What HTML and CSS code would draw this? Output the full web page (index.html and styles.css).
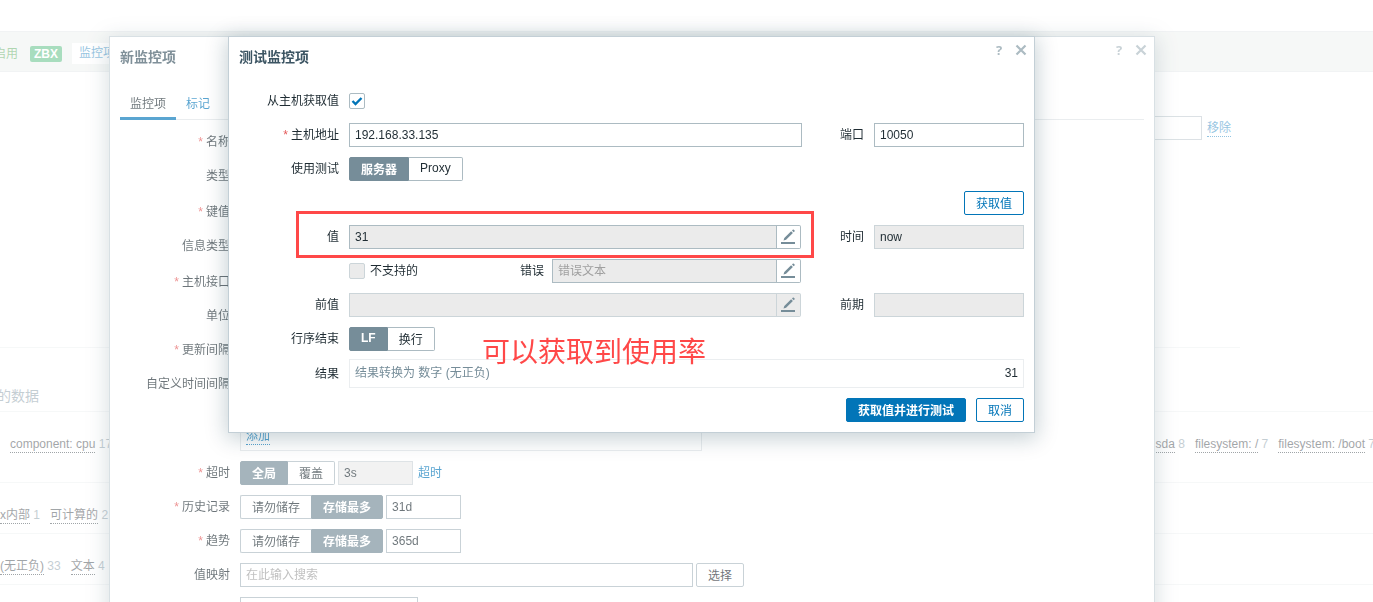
FILE: index.html
```
<!DOCTYPE html>
<html lang="zh-CN">
<head>
  <meta charset="UTF-8">
  <meta name="viewport" content="width=device-width, initial-scale=1.0">
  <title>测试监控项</title>
  <link rel="stylesheet" href="styles.css">
</head>
<body>
  <div class="page">
    <nav class="host-nav">
      <span class="status-enabled">启用</span>
      <span class="status-zbx">ZBX</span>
      <a class="nav-item" href="#items">监控项</a>
    </nav>

    <div class="filter">
      <div class="filter-row">
        <input type="text" class="filter-value" aria-label="值">
        <a class="link-dotted" href="#remove">移除</a>
      </div>
    </div>

    <h4 class="subfilter-title">的数据</h4>
    <div class="subfilter subfilter-tags">
      <div class="subfilter-group">
        <span><a href="#cpu">component: cpu</a> 17</span>
      </div>
      <div class="subfilter-group subfilter-right">
        <span><a href="#sda">sda</a> 8</span>
        <span><a href="#root">filesystem: /</a> 7</span>
        <span><a href="#boot">filesystem: /boot</a> 7</span>
      </div>
    </div>
    <div class="subfilter subfilter-cut">
      <div class="subfilter-group">
        <span><a href="#internal">x内部</a> 1</span>
        <span><a href="#calculated">可计算的</a> 2</span>
      </div>
    </div>
    <div class="subfilter subfilter-cut">
      <div class="subfilter-group">
        <span><a href="#unsigned"> (无正负)</a> 33</span>
        <span><a href="#text">文本</a> 4</span>
      </div>
    </div>
  </div>

  <div class="overlay overlay-item">
    <section class="dialog dialog-item">
      <header class="dialog-header">
        <h4>新监控项</h4>
        <button type="button" class="btn-icon" aria-label="帮助">?</button>
        <button type="button" class="btn-icon" aria-label="关闭">
          <svg width="12" height="12" viewBox="0 0 12 12"><path d="M1.5 1.5l9 9M10.5 1.5l-9 9" stroke="currentColor" stroke-width="2.2" fill="none"/></svg>
        </button>
      </header>
      <nav class="tabs">
        <a class="tab tab-active" href="#item">监控项</a>
        <a class="tab" href="#tags">标记</a>
      </nav>
      <form class="item-form">
        <div class="item-row"><label class="required" for="name">名称</label><input type="text" id="name" class="w-wide"></div>
        <div class="item-row row-select"><label for="type">类型</label><select id="type"><option>Zabbix客户端</option></select></div>
        <div class="item-row"><label class="required" for="key">键值</label><input type="text" id="key" class="w-wide"></div>
        <div class="item-row row-select"><label for="valueType">信息类型</label><select id="valueType"><option>数字 (无正负)</option></select></div>
        <div class="item-row"><label class="required" for="interface">主机接口</label><input type="text" id="interface" class="w-wide"></div>
        <div class="item-row"><label for="units">单位</label><input type="text" id="units" class="w-wide"></div>
        <div class="item-row"><label class="required" for="delay">更新间隔</label><input type="text" id="delay" class="w-short"></div>
        <div class="item-row">
          <span class="label">自定义时间间隔</span>
          <div class="intervals"><a class="link-dotted" href="#add">添加</a></div>
        </div>
        <div class="item-row">
          <label class="required" for="timeout">超时</label>
          <div class="toggle"><button type="button" class="selected">全局</button><button type="button">覆盖</button></div>
          <input type="text" id="timeout" class="w-short" value="3s" disabled>
          <a class="link" href="#timeouts">超时</a>
        </div>
        <div class="item-row">
          <label class="required" for="history">历史记录</label>
          <div class="toggle"><button type="button">请勿储存</button><button type="button" class="selected">存储最多</button></div>
          <input type="text" id="history" class="w-short" value="31d">
        </div>
        <div class="item-row">
          <label class="required" for="trends">趋势</label>
          <div class="toggle"><button type="button">请勿储存</button><button type="button" class="selected">存储最多</button></div>
          <input type="text" id="trends" class="w-short" value="365d">
        </div>
        <div class="item-row">
          <label for="valuemap">值映射</label>
          <input type="text" id="valuemap" class="w-wide" placeholder="在此输入搜索">
          <button type="button" class="btn-grey">选择</button>
        </div>
        <div class="item-row">
          <span class="label"></span>
          <input type="text" class="w-medium" aria-label="填充主机资产记录字段">
        </div>
      </form>
    </section>
  </div>

  <div class="overlay overlay-test">
    <section class="dialog">
      <header class="dialog-header">
        <h4>测试监控项</h4>
        <button type="button" class="btn-icon" aria-label="帮助">?</button>
        <button type="button" class="btn-icon" aria-label="关闭">
          <svg width="12" height="12" viewBox="0 0 12 12"><path d="M1.5 1.5l9 9M10.5 1.5l-9 9" stroke="currentColor" stroke-width="2.2" fill="none"/></svg>
        </button>
      </header>
      <form class="test-form">
        <div class="test-row">
          <label for="getValue">从主机获取值</label>
          <div class="field"><input type="checkbox" id="getValue" checked></div>
        </div>
        <div class="test-row">
          <label class="required" for="address">主机地址</label>
          <input type="text" id="address" value="192.168.33.135">
          <label for="port">端口</label>
          <input type="text" id="port" value="10050">
        </div>
        <div class="test-row">
          <span class="label">使用测试</span>
          <div class="toggle"><button type="button" class="selected">服务器</button><button type="button">Proxy</button></div>
        </div>
        <div class="test-actions">
          <button type="button" class="btn">获取值</button>
        </div>
        <div class="test-row">
          <label for="value">值</label>
          <div class="multiline">
            <input type="text" id="value" value="31" readonly>
            <button type="button" aria-label="编辑值">
              <svg width="16" height="16" viewBox="0 0 16 16"><path d="M1 13h14v2H1z" fill="currentColor"/><path d="M3.5 11.5l.8-2.6 6.8-6.6 1.8 1.8-6.8 6.6zM12 1.5l1-1c.6-.5 2.2 1 1.7 1.7l-1 1z" fill="currentColor"/></svg>
            </button>
          </div>
          <label for="time">时间</label>
          <input type="text" id="time" value="now" readonly class="muted">
          <div class="highlight"></div>
        </div>
        <div class="test-row">
          <span class="label"></span>
          <div class="field">
            <input type="checkbox" id="notSupported" disabled>
            <label for="notSupported">不支持的</label>
            <label class="error-label" for="error">错误</label>
            <div class="multiline w-error">
              <input type="text" id="error" placeholder="错误文本" readonly>
              <button type="button" aria-label="编辑错误">
                <svg width="16" height="16" viewBox="0 0 16 16"><path d="M1 13h14v2H1z" fill="currentColor"/><path d="M3.5 11.5l.8-2.6 6.8-6.6 1.8 1.8-6.8 6.6zM12 1.5l1-1c.6-.5 2.2 1 1.7 1.7l-1 1z" fill="currentColor"/></svg>
              </button>
            </div>
          </div>
        </div>
        <div class="test-row">
          <label for="prevValue">前值</label>
          <div class="multiline">
            <input type="text" id="prevValue" disabled>
            <button type="button" aria-label="编辑前值" disabled>
              <svg width="16" height="16" viewBox="0 0 16 16"><path d="M1 13h14v2H1z" fill="currentColor"/><path d="M3.5 11.5l.8-2.6 6.8-6.6 1.8 1.8-6.8 6.6zM12 1.5l1-1c.6-.5 2.2 1 1.7 1.7l-1 1z" fill="currentColor"/></svg>
            </button>
          </div>
          <label for="prevTime">前期</label>
          <input type="text" id="prevTime" disabled>
        </div>
        <div class="test-row row-eol">
          <span class="label">行序结束</span>
          <div class="toggle"><button type="button" class="selected">LF</button><button type="button">换行</button></div>
        </div>
        <div class="test-row">
          <span class="label">结果</span>
          <div class="result"><span class="result-type">结果转换为 数字 (无正负)</span><span>31</span></div>
        </div>
      </form>
      <footer class="dialog-footer">
        <button type="button" class="btn btn-primary">获取值并进行测试</button>
        <button type="button" class="btn">取消</button>
      </footer>
      <div class="note">可以获取到使用率</div>
    </section>
  </div>
</body>
</html>
```
FILE: styles.css
```
* {
  box-sizing: border-box;
}

body {
  margin: 0;
  height: 100vh;
  overflow: hidden;
  background: #fff;
  color: #1f2c33;
  font-family: "Liberation Sans", "Noto Sans CJK SC", sans-serif;
  font-size: 12px;
  line-height: 24px;
}

h4 {
  margin: 0;
  font-size: 14px;
}

a {
  color: #0275b8;
  text-decoration: none;
}

input, select, button {
  height: 24px;
  margin: 0;
  font-family: inherit;
  font-size: 12px;
  color: #1f2c33;
}

input[type="text"], select {
  min-width: 0;
  padding: 0 5px;
  border: 1px solid #acbbc2;
  border-radius: 0;
  background: #fff;
}

input::placeholder {
  color: #a0a0a0;
}

input[type="text"]:read-only {
  background: #ebebeb;
}

input[type="text"]:disabled, input[type="text"].muted {
  border-color: #ccd5d9;
}

input[type="checkbox"] {
  appearance: none;
  width: 16px;
  height: 16px;
  border: 1px solid #acbbc2;
  border-radius: 2px;
  background: #fff;
}

input[type="checkbox"]:checked {
  background: url("data:image/svg+xml,%3Csvg xmlns='http://www.w3.org/2000/svg' viewBox='0 0 14 14'%3E%3Cpath d='M2.5 7l3 3 6-6' fill='none' stroke='%230275b8' stroke-width='2.4'/%3E%3C/svg%3E") center no-repeat;
}

input[type="checkbox"]:disabled {
  border-color: #ccd5d9;
  background: #ebebeb;
}

.link-dotted {
  line-height: 16px;
  border-bottom: 1px dotted #0275b8;
}

/* page under the dialogs */

.page {
  margin: 31px -2px 0 -6px;
}

.host-nav {
  display: flex;
  align-items: center;
  height: 41px;
  gap: 10px;
  padding-top: 4px;
  background: #ebefed;
  border-top: 1px solid #dfe4e7;
  border-bottom: 1px solid #dfe4e7;
}

.status-enabled {
  margin-right: 2px;
  color: #429e47;
}

.status-zbx {
  height: 16px;
  padding: 0 4px;
  border-radius: 2px;
  background: #34af67;
  color: #fff;
  font-weight: bold;
  line-height: 16px;
}

.nav-item {
  height: 21px;
  padding: 0 7px;
  background: #fff;
  line-height: 21px;
}

.filter {
  height: 276px;
  margin-right: 135px;
  border-bottom: 1px solid #ebeef0;
}

.filter-row {
  display: flex;
  align-items: center;
  justify-content: flex-end;
  gap: 5px;
  padding: 44px 9px 0 0;
}

.filter-value {
  width: 150px;
}

.subfilter-title {
  padding: 40px 0 7px 3px;
  border-bottom: 1px solid #ebeef0;
  color: #768d99;
  font-weight: normal;
  line-height: 16px;
}

.subfilter {
  display: flex;
  justify-content: space-between;
  min-height: 51px;
  padding: 25px 0 0 16px;
  border-bottom: 1px solid #ebeef0;
  color: #768d99;
  line-height: 15px;
}

.subfilter-tags {
  min-height: 71px;
}

.subfilter-cut {
  padding-left: 6px;
}

.subfilter-group {
  display: flex;
  gap: 10px;
}

.subfilter a {
  display: inline-block;
  border-bottom: 1px dotted #1f2c33;
  color: #1f2c33;
}

/* dialogs */

.overlay {
  position: fixed;
  inset: 0;
  overflow: hidden;
  background: rgba(255, 255, 255, 0.35);
}

.overlay-item {
  padding: 36px 218px 0 109px;
}

.overlay-test {
  padding: 36px 338px 0 228px;
}

.dialog {
  position: relative;
  padding: 0 10px 10px;
  border: 1px solid #c3cfd6;
  background: #fff;
  box-shadow: 0 4px 20px 2px rgba(0, 51, 68, 0.22);
}

.dialog-header {
  display: flex;
  align-items: flex-start;
  gap: 6px;
  height: 52px;
}

.dialog-header h4 {
  flex: 1;
  padding-top: 8px;
  color: #3c5563;
}

.btn-icon {
  width: 16px;
  padding: 2px 0 0;
  border: none;
  background: none;
  color: #acbbc2;
  font-family: "Open Sans", sans-serif;
  font-size: 13px;
  font-weight: bold;
  line-height: 22px;
}

.btn-icon:last-child {
  margin-right: -5px;
}

.btn-icon svg {
  display: block;
  margin: 0 auto;
}

.tabs {
  display: flex;
  height: 31px;
  border-bottom: 1px solid #dfe4e7;
}

.tab {
  height: 31px;
  padding: 0 10px;
  line-height: 30px;
}

.tab-active {
  border-bottom: 3px solid #0275b8;
  color: #1f2c33;
}

.item-form {
  padding-top: 10px;
}

.item-row {
  display: flex;
  align-items: flex-start;
  gap: 3px;
  margin-bottom: 10px;
}

.item-row > label, .item-row > .label {
  flex: none;
  width: 110px;
  margin-right: 7px;
  text-align: right;
}

.row-select select {
  height: 26px;
}

.required::before {
  content: "*";
  margin-right: 3px;
  color: #e45959;
}

.w-short {
  width: 75px;
}

.w-medium {
  width: 178px;
}

.w-wide {
  width: 453px;
}

.link {
  padding-left: 2px;
}

.intervals {
  display: flex;
  align-items: flex-end;
  width: 462px;
  height: 79px;
  padding: 0 5px 5px;
  border: 1px solid #dfe4e7;
}

.toggle {
  display: flex;
}

.toggle button {
  padding: 0 11px 2px;
  border: 1px solid #acbbc2;
  background: #fff;
}

.toggle button:first-child {
  border-right: none;
  border-radius: 2px 0 0 2px;
}

.toggle button:last-child {
  border-left: none;
  border-radius: 0 2px 2px 0;
}

.toggle button.selected {
  border: 1px solid #768d99;
  background: #768d99;
  color: #fff;
  font-weight: bold;
}

.btn, .btn-grey {
  padding: 0 11px 2px;
  border: 1px solid #0275b8;
  border-radius: 2px;
  background: #fff;
  color: #0275b8;
}

.btn-grey {
  border-color: #acbbc2;
  color: #1f2c33;
}

.btn-primary {
  background: #0275b8;
  color: #fff;
  font-weight: bold;
}

.test-row {
  position: relative;
  display: grid;
  grid-template-columns: 100px 1fr 52px 150px;
  column-gap: 10px;
  margin-bottom: 10px;
}

.test-row > label, .test-row > .label {
  text-align: right;
}

.row-eol {
  margin-bottom: 8px;
}

.row-eol + .test-row {
  align-items: center;
}

.field {
  display: flex;
  align-items: center;
  gap: 5px;
}

.error-label {
  margin-left: auto;
  margin-right: 3px;
}

.multiline {
  display: flex;
  margin-right: 1px;
}

.multiline input {
  flex: 1;
}

.multiline button {
  width: 24px;
  padding: 0 4px 0 3px;
  border: 1px solid #acbbc2;
  border-left: none;
  border-radius: 0 2px 2px 0;
  background: #fff;
  color: #768d99;
}

.multiline button:disabled {
  border-color: #ccd5d9;
  background: #ebebeb;
}

.multiline svg {
  display: block;
}

.w-error {
  width: 249px;
}

.test-actions {
  display: flex;
  justify-content: flex-end;
  margin-bottom: 10px;
}

.result {
  grid-column: 2 / 5;
  display: flex;
  justify-content: space-between;
  padding: 5px;
  border: 1px solid #ebeef0;
  line-height: 17px;
}

.result-type {
  color: #768d99;
}

.dialog-footer {
  display: flex;
  justify-content: flex-end;
  gap: 10px;
}

/* marks over the dialog */

.highlight {
  position: absolute;
  inset: -14px 210px -9px 57px;
  border: 3px solid #ff4848;
}

.note {
  position: absolute;
  top: 293px;
  left: 253px;
  color: #ff4848;
  font-family: "Noto Sans CJK SC", sans-serif;
  font-size: 28px;
  line-height: 40px;
}
```
